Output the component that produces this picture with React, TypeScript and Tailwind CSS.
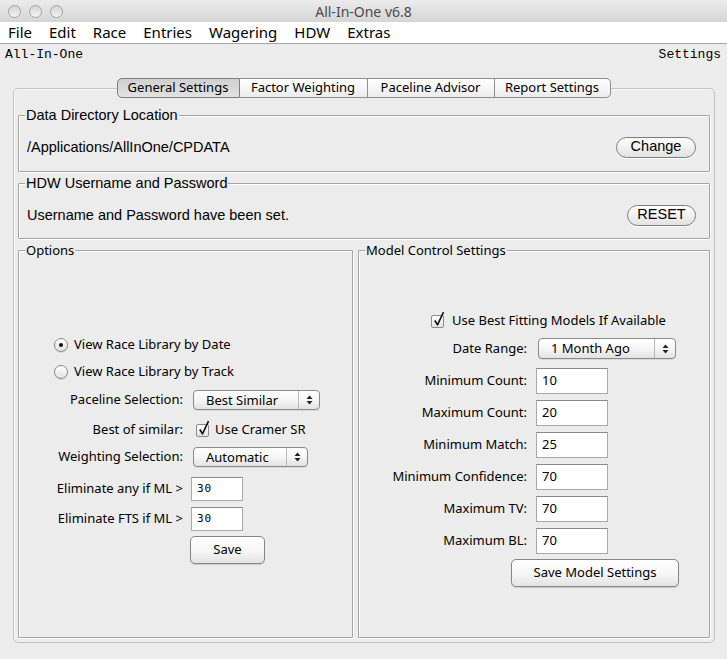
import React from "react";

const ui = { fontFamily: '"Noto Sans", "DejaVu Sans", sans-serif' };
const narrow = { fontFamily: '"Liberation Sans", Arial, sans-serif' };
const mono = { fontFamily: '"Liberation Mono", "Courier New", monospace' };

function Light() {
  return <div className="h-[13px] w-[13px] rounded-full border border-[#a3a3a3] bg-gradient-to-b from-[#d4d4d4] to-[#f4f4f4]" />;
}

function PillButton({ label, width }: { label: string; width: string }) {
  return (
    <div
      className={`${width} flex h-[21px] items-center justify-center rounded-full border border-[#7b7b7b] bg-gradient-to-b from-white to-[#e2e2e2] text-[14.5px] text-black shadow-[0_1px_0_#fff]`}
      style={narrow}
    >
      {label}
    </div>
  );
}

function RectButton({ label, width }: { label: string; width: string }) {
  return (
    <div
      className={`${width} flex h-[28px] items-center justify-center rounded-[5px] border border-[#868686] bg-gradient-to-b from-white via-[#f7f7f7] to-[#e3e3e3] text-[13px] text-black shadow-[0_1px_1px_rgba(0,0,0,0.15)]`}
    >
      {label}
    </div>
  );
}

function Select({ value, width, height = "h-[20px]" }: { value: string; width: string; height?: string }) {
  return (
    <div
      className={`${width} ${height} flex items-stretch rounded-[4px] border border-[#8a8a8a] bg-gradient-to-b from-white via-[#f6f6f6] to-[#e2e2e2] shadow-[0_1px_0_rgba(0,0,0,0.08)]`}
    >
      <div className="flex flex-1 items-center pl-[12px] text-[13px] leading-none">{value}</div>
      <div className="flex w-[21px] items-center justify-center border-l border-[#b8b8b8]">
        <svg width="7" height="10" viewBox="0 0 7 10">
          <path d="M3.5 0.5 L6.5 4 L0.5 4 Z" fill="#222" />
          <path d="M3.5 9.5 L6.5 6 L0.5 6 Z" fill="#222" />
        </svg>
      </div>
    </div>
  );
}

function Check() {
  return (
    <div className="relative h-[13px] w-[13px] rounded-[2px] border border-[#8a8a8a] bg-gradient-to-b from-white to-[#e4e4e4]">
      <svg className="absolute left-[1px] top-[-5px]" width="13" height="17" viewBox="0 0 13 17">
        <path d="M1.8 9.5 L4.5 13.8 L10.5 1.2" stroke="#111" strokeWidth="1.6" fill="none" strokeLinejoin="round" />
      </svg>
    </div>
  );
}

function Radio({ on }: { on?: boolean }) {
  return (
    <div className="flex h-[14px] w-[14px] items-center justify-center rounded-full border border-[#8a8a8a] bg-gradient-to-b from-white to-[#e2e2e2] shadow-[0_1px_0_rgba(0,0,0,0.1)]">
      {on && <div className="h-[4px] w-[4px] rounded-full bg-[#111]" />}
    </div>
  );
}

function Field({ value, width, height, small }: { value: string; width: string; height: string; small?: boolean }) {
  return (
    <div
      className={`${width} ${height} flex items-center border border-[#a8a8a8] border-t-[#8a8a8a] bg-white pl-[5px] ${small ? "text-[11px] tracking-[1px]" : "text-[13px]"}`}
      style={small ? { fontFamily: '"DejaVu Sans Mono", monospace' } : undefined}
    >
      {value}
    </div>
  );
}

const groupCls =
  "rounded-[1px] border border-[#a3a3a3] shadow-[inset_1px_1px_0_#fff,1px_1px_0_#fff]";

export default function App() {
  const modelRows = [
    ["Minimum Count:", "10"],
    ["Maximum Count:", "20"],
    ["Minimum Match:", "25"],
    ["Minimum Confidence:", "70"],
    ["Maximum TV:", "70"],
    ["Maximum BL:", "70"],
  ];

  return (
    <div className="h-[659px] w-[727px] overflow-hidden bg-[#ececec] text-black" style={ui}>
      {/* title bar */}
      <div className="relative flex h-[22px] items-center bg-gradient-to-b from-[#ebebeb] to-[#d5d5d5]">
        <div className="flex gap-[8px] pl-[8px]">
          <Light />
          <Light />
          <Light />
        </div>
        <div className="absolute inset-0 flex items-center justify-center text-[14px] text-[#4a4a4a]">
          All-In-One v6.8
        </div>
      </div>

      {/* menu */}
      <div className="flex h-[22px] items-center gap-[17px] border-b border-[#a5a5a5] bg-white pl-[8px] text-[15px]">
        <span>File</span>
        <span>Edit</span>
        <span>Race</span>
        <span>Entries</span>
        <span>Wagering</span>
        <span>HDW</span>
        <span>Extras</span>
      </div>

      <div className="flex h-[22px] items-center justify-between pl-[5px] pr-[6px] text-[13px]" style={mono}>
        <span>All-In-One</span>
        <span>Settings</span>
      </div>

      {/* tabs */}
      <div className="relative z-10 mt-[12px] flex h-[20px] justify-center text-[13px]">
        <div className="flex w-[123px] items-center justify-center rounded-l-[5px] border border-[#7e7e7e] bg-gradient-to-b from-[#d0d0d0] to-[#e2e2e2]">
          General Settings
        </div>
        <div className="flex w-[128px] items-center justify-center border-y border-r border-[#8e8e8e] bg-gradient-to-b from-white to-[#ececec]">
          Factor Weighting
        </div>
        <div className="flex w-[127px] items-center justify-center border-y border-r border-[#8e8e8e] bg-gradient-to-b from-white to-[#ececec]">
          Paceline Advisor
        </div>
        <div className="flex w-[116px] items-center justify-center rounded-r-[5px] border-y border-r border-[#8e8e8e] bg-gradient-to-b from-white to-[#ececec]">
          Report Settings
        </div>
      </div>

      {/* tab panel */}
      <div className="-mt-[10px] ml-[13px] flex h-[555px] w-[702px] flex-col rounded-[5px] border border-[#c2c2c2] px-[4px] pb-[4px] pt-[19px] shadow-[inset_1px_1px_0_#f7f7f7]">
        <fieldset className={`h-[64px] ${groupCls}`}>
          <legend className="ml-[6px] bg-[#ececec] px-[1px] text-[14.5px] leading-[14px]" style={narrow}>
            Data Directory Location
          </legend>
          <div className="flex h-[48px] items-center justify-between pl-[8px] pr-[13px] pt-[2px] text-[14.5px]" style={narrow}>
            <span className="pt-[2px]">/Applications/AllInOne/CPDATA</span>
            <PillButton label="Change" width="w-[80px]" />
          </div>
        </fieldset>

        <fieldset className={`mt-[4px] h-[63px] ${groupCls}`}>
          <legend className="ml-[6px] bg-[#ececec] px-[1px] text-[14.5px] leading-[14px]" style={narrow}>
            HDW Username and Password
          </legend>
          <div className="flex h-[48px] items-center justify-between pl-[8px] pr-[13px] pt-[2px] text-[14.5px]" style={narrow}>
            <span className="pt-[2px]">Username and Password have been set.</span>
            <PillButton label="RESET" width="w-[69px]" />
          </div>
        </fieldset>

        <div className="mt-[4px] flex flex-1 gap-[5px]">
          {/* Options */}
          <fieldset className={`w-[335px] ${groupCls}`}>
            <legend className="ml-[6px] bg-[#ececec] px-[1px] text-[13px] leading-[14px]">Options</legend>
            <div className="flex flex-col pt-[78px] text-[13px]">
              <div className="flex h-[20px] items-center gap-[6px] pl-[35px]">
                <Radio on />
                <span>View Race Library by Date</span>
              </div>
              <div className="mt-[7px] flex h-[20px] items-center gap-[6px] pl-[35px]">
                <Radio />
                <span>View Race Library by Track</span>
              </div>
              <div className="mt-[8px] flex h-[20px] items-center">
                <div className="w-[164px] text-right">Paceline Selection:</div>
                <div className="ml-[10px]">
                  <Select value="Best Similar" width="w-[127px]" />
                </div>
              </div>
              <div className="mt-[10px] flex h-[20px] items-center">
                <div className="w-[164px] text-right">Best of similar:</div>
                <div className="ml-[13px] flex items-center gap-[6px]">
                  <Check />
                  <span>Use Cramer SR</span>
                </div>
              </div>
              <div className="mt-[7px] flex h-[20px] items-center">
                <div className="w-[164px] text-right">Weighting Selection:</div>
                <div className="ml-[10px]">
                  <Select value="Automatic" width="w-[115px]" />
                </div>
              </div>
              <div className="mt-[10px] flex h-[24px] items-center">
                <div className="w-[164px] text-right">Eliminate any if ML &gt;</div>
                <div className="ml-[8px]">
                  <Field value="30" width="w-[52px]" height="h-[24px]" small />
                </div>
              </div>
              <div className="mt-[6px] flex h-[24px] items-center">
                <div className="w-[164px] text-right">Eliminate FTS if ML &gt;</div>
                <div className="ml-[8px]">
                  <Field value="30" width="w-[52px]" height="h-[24px]" small />
                </div>
              </div>
              <div className="mt-[5px] pl-[171px]">
                <RectButton label="Save" width="w-[75px]" />
              </div>
            </div>
          </fieldset>

          {/* Model control */}
          <fieldset className={`flex-1 ${groupCls}`}>
            <legend className="ml-[6px] bg-[#ececec] px-[1px] text-[13px] leading-[14px]">Model Control Settings</legend>
            <div className="flex flex-col pt-[54px] text-[13px]">
              <div className="flex h-[20px] items-center gap-[8px] pl-[72px]">
                <Check />
                <span>Use Best Fitting Models If Available</span>
              </div>
              <div className="mt-[7px] flex h-[21px] items-center">
                <div className="w-[168px] text-right">Date Range:</div>
                <div className="ml-[11px]">
                  <Select value="1 Month Ago" width="w-[138px]" height="h-[21px]" />
                </div>
              </div>
              {modelRows.map(([label, value], i) => (
                <div key={label} className={`${i === 0 ? "mt-[9px]" : "mt-[6px]"} flex h-[26px] items-center`}>
                  <div className="w-[168px] text-right">{label}</div>
                  <div className="ml-[9px]">
                    <Field value={value} width="w-[72px]" height="h-[26px]" />
                  </div>
                </div>
              ))}
              <div className="mt-[5px] pl-[152px]">
                <RectButton label="Save Model Settings" width="w-[168px]" />
              </div>
            </div>
          </fieldset>
        </div>
      </div>
    </div>
  );
}
